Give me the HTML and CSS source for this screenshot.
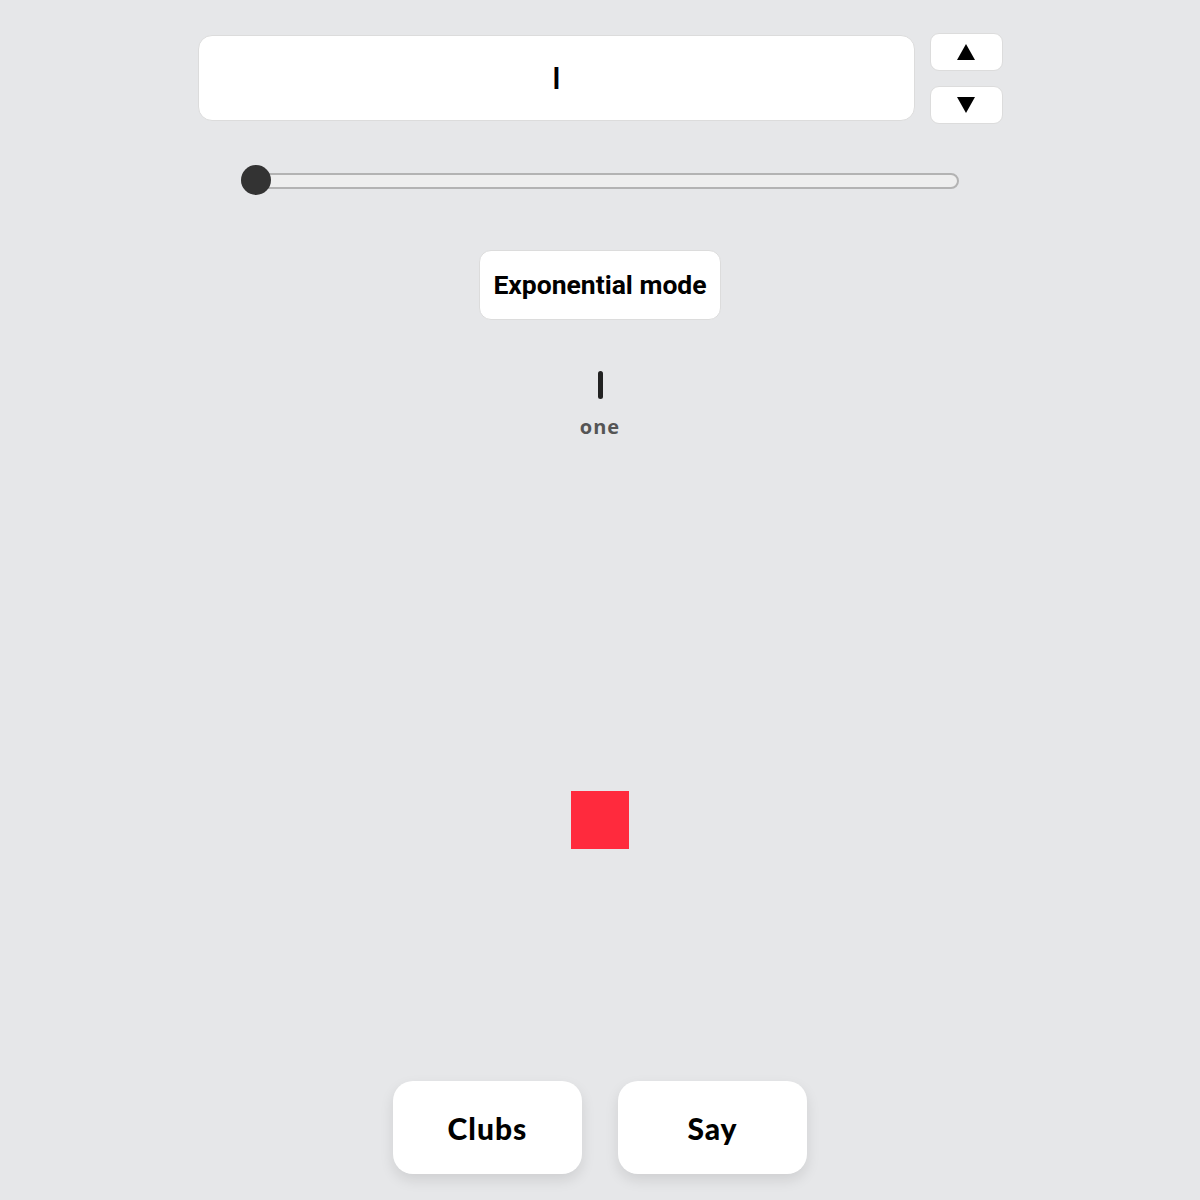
FILE: index.html
```html
<!DOCTYPE html>
<html>
<head>
<meta charset="utf-8">
<link rel="stylesheet" href="styles.css">
</head>
<body>
<div class="page">
  <div class="top-row">
    <div class="display"><span class="display-val">I</span></div>
    <div class="steppers">
      <button class="step"><svg width="20" height="18" viewBox="0 0 20 18"><path d="M10 1 L19 17 L1 17 Z" fill="#000"/></svg></button>
      <button class="step"><svg width="20" height="18" viewBox="0 0 20 18"><path d="M1 1 L19 1 L10 17 Z" fill="#000"/></svg></button>
    </div>
  </div>
  <div class="slider-row">
    <div class="track"><div class="thumb"></div></div>
  </div>
  <div class="mode-row"><button class="mode">Exponential mode</button></div>
  <div class="result">
    <div class="numeral"></div>
    <div class="word">one</div>
  </div>
  <div class="stage"><div class="square"></div></div>
  <div class="actions">
    <button class="action">Clubs</button>
    <button class="action">Say</button>
  </div>
</div>
</body>
</html>
```
FILE: styles.css
```css
html, body { margin: 0; padding: 0; }
body {
  background: #e6e7e9;
  font-family: "Roboto", "Liberation Sans", sans-serif;
  width: 1200px;
  height: 1200px;
  overflow: hidden;
}
.page {
  display: flex;
  flex-direction: column;
  align-items: center;
  height: 1200px;
}
.top-row {
  display: flex;
  gap: 15px;
  margin-top: 33px;
}
.display {
  width: 717px;
  height: 86px;
  margin-top: 2px;
  background: #fff;
  border: 1px solid #dcdcdc;
  border-radius: 14px;
  display: flex;
  align-items: center;
  justify-content: center;
  box-sizing: border-box;
}
.display-val {
  font-family: "Liberation Sans", sans-serif;
  font-weight: 700;
  font-size: 31px;
  color: #000;
  line-height: 30px;
  transform: scaleX(0.85);
  margin-top: 2px;
}
.steppers {
  display: flex;
  flex-direction: column;
  gap: 15px;
}
.step {
  width: 73px;
  height: 38px;
  background: #fff;
  border: 1px solid #dcdcdc;
  border-radius: 9px;
  display: flex;
  align-items: center;
  justify-content: center;
  padding: 0;
}
.slider-row {
  margin-top: 49px;
  width: 718px;
}
.track {
  position: relative;
  height: 16px;
  background: #eeeeee;
  border: 2px solid #b3b3b3;
  border-radius: 8px;
  box-sizing: border-box;
}
.thumb {
  position: absolute;
  left: -2px;
  top: 50%;
  width: 30px;
  height: 30px;
  margin-top: -16px;
  border-radius: 50%;
  background: #333;
}
.mode-row { margin-top: 61px; }
.mode {
  width: 242px;
  height: 70px;
  background: #fff;
  border: 1px solid #dcdcdc;
  border-radius: 12px;
  font-family: "Roboto", sans-serif;
  font-weight: 700;
  font-size: 26.5px;
  color: #000;
  padding: 0 0 2px 0;
}
.result {
  margin-top: 51px;
  display: flex;
  flex-direction: column;
  align-items: center;
}
.numeral {
  width: 5px;
  height: 28px;
  background: #222;
  border-radius: 3px;
}
.word {
  margin-top: 18px;
  font-family: "Open Sans", sans-serif;
  font-weight: 700;
  font-size: 20px;
  letter-spacing: 1px;
  color: #555;
  line-height: 20px;
}
.stage {
  flex: 1;
  display: flex;
  align-items: center;
  justify-content: center;
  padding-top: 122px;
  box-sizing: border-box;
}
.square {
  width: 58px;
  height: 58px;
  background: #ff2a3d;
}
.actions {
  display: flex;
  gap: 36px;
  margin-bottom: 26px;
}
.action {
  width: 189px;
  height: 93px;
  background: #fff;
  border: none;
  border-radius: 20px;
  box-shadow: 0 6px 14px rgba(0,0,0,0.10);
  font-family: "Lato", sans-serif;
  font-weight: 900;
  font-size: 30px;
  letter-spacing: 1px;
  color: #000;
  padding: 0;
}
```
